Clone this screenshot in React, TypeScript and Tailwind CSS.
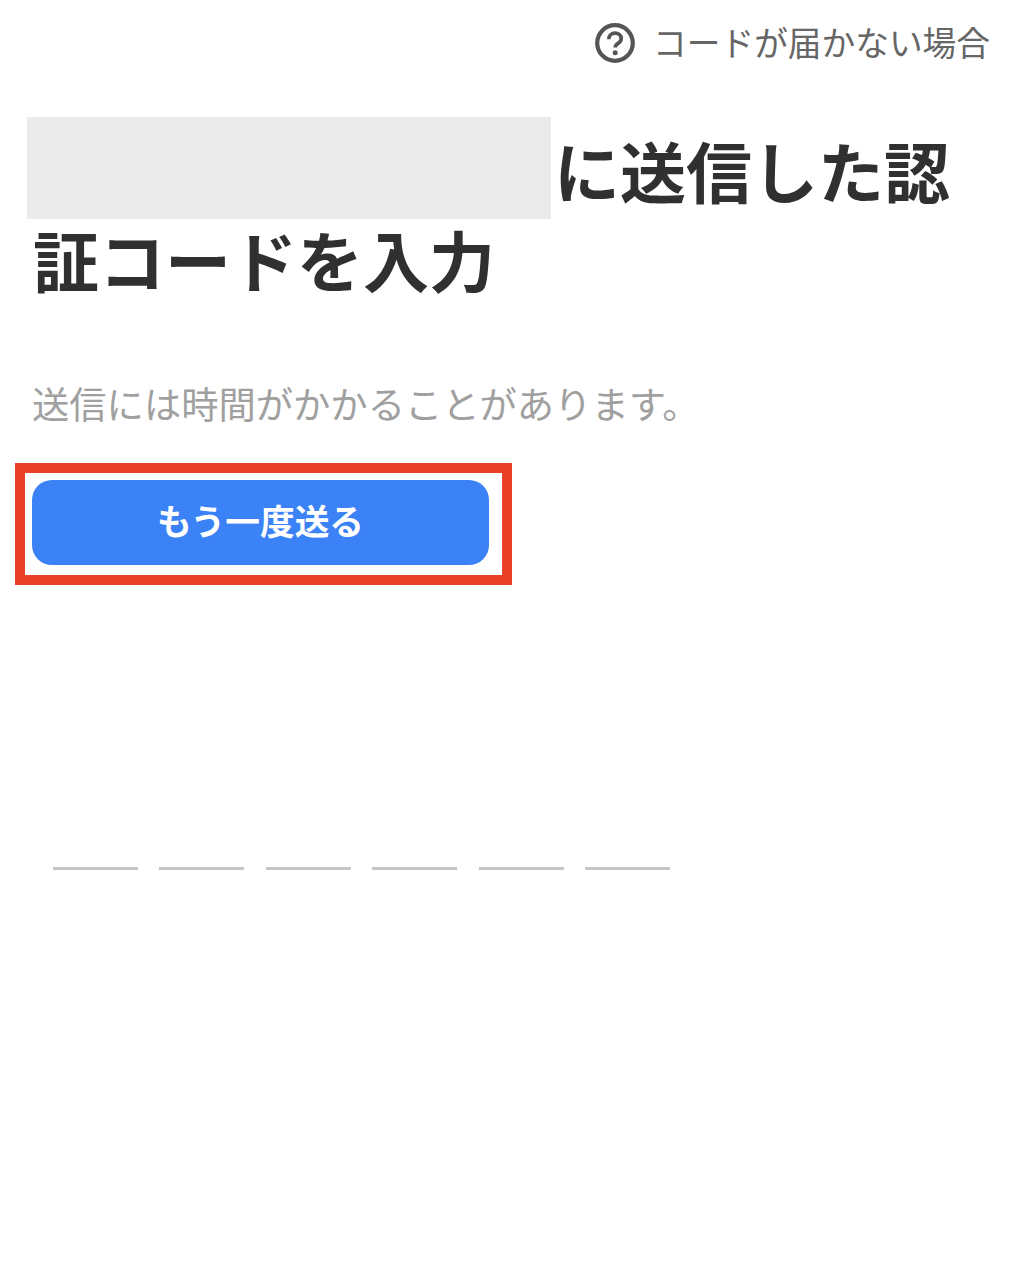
const font = '[font-family:"Noto_Sans_CJK_JP","Liberation_Sans",sans-serif]';

function HelpIcon() {
  return (
    <svg viewBox="0 0 40 40" className="h-[40px] w-[40px] shrink-0" fill="none">
      <circle cx="20" cy="20" r="17.8" stroke="#555" strokeWidth="4.2" />
      <path
        d="M13.8 16.2c0-3.6 2.7-6 6.3-6 3.5 0 6.1 2.2 6.1 5.3 0 2.4-1.3 3.6-3.1 4.8-1.8 1.2-2.9 2.1-2.9 4.1"
        stroke="#555"
        strokeWidth="3.8"
      />
      <circle cx="20.2" cy="29.8" r="2.5" fill="#555" />
    </svg>
  );
}

export default function App() {
  return (
    <div className={`${font} h-[1269px] w-[1018px] overflow-hidden bg-white`}>
      <header className="flex h-[117px] items-start justify-end pr-[28px] pt-[23px]">
        <div className="flex items-center gap-[18px]">
          <HelpIcon />
          <span className="relative top-[-1px] text-[33.7px] leading-[40px] text-[#666666]">コードが届かない場合</span>
        </div>
      </header>

      <h1 className="pl-[27px] pr-[60px] text-[66px] font-bold leading-[90px] text-[#303030]">
        <span className="mr-[3px] inline-block h-[102px] w-[524px] bg-[#ebebeb] align-top" />
        <span className="relative top-[7px]">に送信した認</span>
        <br />
        <span className="relative top-[-6px] ml-[6px]">証コードを入力</span>
      </h1>

      <div className="pl-[32px] pt-[69px]">
        <p className="text-[37.3px] leading-[50px] text-[#a0a0a0]">送信には時間がかかることがあります。</p>
      </div>

      <div className="ml-[15px] mt-[35px] h-[122px] w-[497px] border-[10px] border-[#ea4027] px-[7px] pt-[7px]">
        <button className="flex h-[85px] w-[457px] items-center justify-center rounded-[20px] bg-[#3b82f6] pb-[4px] text-[34.7px] font-bold text-white">
          もう一度送る
        </button>
      </div>

      <div className="ml-[53px] mt-[282px] flex gap-[21.4px]">
        {[0, 1, 2, 3, 4, 5].map((i) => (
          <div key={i} className="h-[3px] w-[85px] bg-[#c6c6c8]" />
        ))}
      </div>
    </div>
  );
}
